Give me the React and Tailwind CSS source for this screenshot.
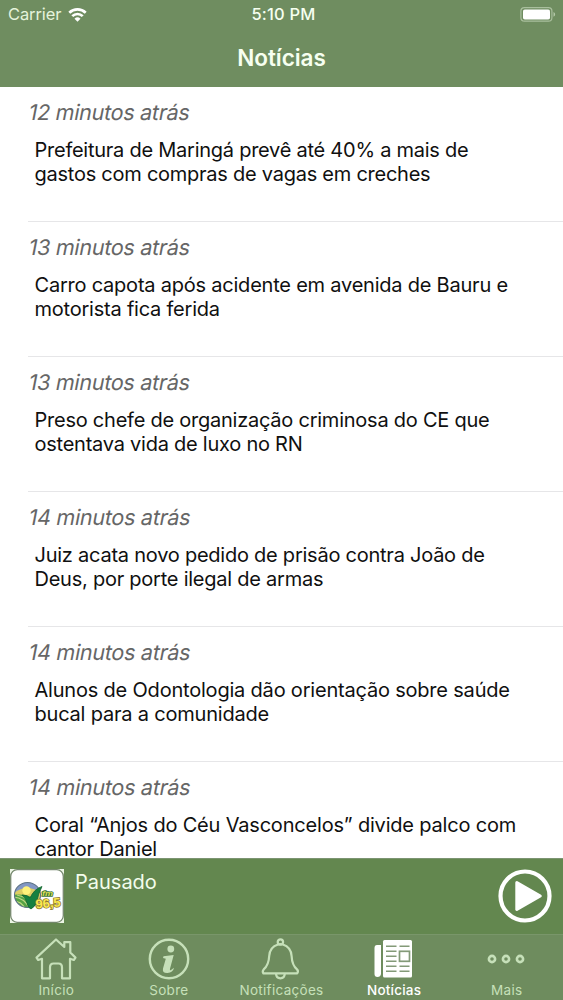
import React from "react";

const news = [
  { time: "12 minutos atrás", spacing: "tracking-[-0.25px]", lines: ["Prefeitura de Maringá prevê até 40% a mais de", "gastos com compras de vagas em creches"] },
  { time: "13 minutos atrás", spacing: "tracking-[-0.22px]", lines: ["Carro capota após acidente em avenida de Bauru e", "motorista fica ferida"] },
  { time: "13 minutos atrás", spacing: "tracking-[-0.24px]", lines: ["Preso chefe de organização criminosa do CE que", "ostentava vida de luxo no RN"] },
  { time: "14 minutos atrás", spacing: "tracking-[-0.24px]", lines: ["Juiz acata novo pedido de prisão contra João de", "Deus, por porte ilegal de armas"] },
  { time: "14 minutos atrás", spacing: "tracking-[-0.2px]", lines: ["Alunos de Odontologia dão orientação sobre saúde", "bucal para a comunidade"] },
  { time: "14 minutos atrás", spacing: "tracking-[-0.19px]", lines: ["Coral “Anjos do Céu Vasconcelos” divide palco com", "cantor Daniel"] },
];

function NewsRow({ time, lines, spacing }) {
  return (
    <article className="flex h-[135px] shrink-0 flex-col pl-7">
      <div className="flex h-full flex-col border-b border-[#e6e6e8] pt-[11px]">
        <time className="ml-[0.5px] -skew-x-[11deg] self-start text-[21.5px] leading-[28px] tracking-[-0.26px] text-[#666]">{time}</time>
        <h2 className={`mt-[12px] pl-[6.5px] text-[20px] leading-[24.4px] font-normal whitespace-nowrap text-[#101010] ${spacing}`}>
          {lines[0]}
          <br />
          {lines[1]}
        </h2>
      </div>
    </article>
  );
}

function WifiIcon() {
  return (
    <svg width="19" height="14" viewBox="0 0 20 15" fill="none" stroke="#fff" strokeWidth="2.9">
      <path d="M1.2 5.1a12.7 12.7 0 0 1 17.6 0" />
      <path d="M4.4 8.7a8 8 0 0 1 11.2 0" />
      <path d="M10 14.6 6.8 11.4a4.6 4.6 0 0 1 6.4 0Z" fill="#fff" stroke="none" />
    </svg>
  );
}

function BatteryIcon() {
  return (
    <svg width="36" height="16" viewBox="0 0 36 16" fill="none">
      <rect x="0.9" y="0.6" width="31" height="13.6" rx="3.5" stroke="#a9bf9d" strokeWidth="1.2" />
      <rect x="3" y="2.5" width="27" height="10" rx="1.8" fill="#fff" />
      <path d="M33.5 5.1v4.6c1.1-.5 1.6-1.3 1.6-2.3s-.5-1.8-1.6-2.3Z" fill="#b3c8a7" />
    </svg>
  );
}

function StationLogo() {
  return (
    <svg width="54" height="54" viewBox="0 0 54 54">
      <defs>
        <clipPath id="globe"><ellipse cx="17.5" cy="26" rx="13" ry="12.5" /></clipPath>
      </defs>
      <rect width="54" height="54" fill="#ecf5e5" />
      <rect x="0.7" y="0.7" width="52.6" height="52.6" rx="6.5" fill="#fff" stroke="#73866b" strokeWidth="1.3" />
      <g clipPath="url(#globe)">
        <rect x="3" y="13" width="30" height="28" fill="#8297c4" />
        <path d="M4 24Q17 14 31 24V31H4Z" fill="#dfce62" />
        <circle cx="16.5" cy="21.5" r="4.2" fill="#fff27a" />
        <path d="M3 26Q15 24 32 32V42H3Z" fill="#55a344" />
        <path d="M3 28Q14 28 20 40M3 32Q12 32 15 40M7 26Q20 29 27 39" fill="none" stroke="#bdd783" strokeWidth="1.2" />
      </g>
      <ellipse cx="17.5" cy="26" rx="13" ry="12.5" fill="none" stroke="#5d7285" strokeWidth="1.1" />
      <path d="M12 26Q18 26 20 29Q24 20 32 17.5Q28 25 27 32Q25 38 21 40Q18 39 17 34Q16 29 12 26Z" fill="#168040" stroke="#13642f" strokeWidth="0.8" />
      <text x="32" y="26.5" fontSize="8" textLength="11" lengthAdjust="spacingAndGlyphs" fontFamily="Liberation Sans, sans-serif" fontStyle="italic" fontWeight="700" fill="#d8dc52" stroke="#39733a" strokeWidth="1.6" paintOrder="stroke">fm</text>
      <text x="25.5" y="38.5" fontSize="12.5" textLength="25" lengthAdjust="spacingAndGlyphs" transform="rotate(-5 38 34)" fontFamily="Liberation Sans, sans-serif" fontWeight="700" fill="#fbe94f" stroke="#8f7b31" strokeWidth="1.6" paintOrder="stroke">96,5</text>
    </svg>
  );
}

function PlayIcon() {
  return (
    <svg width="54" height="54" viewBox="0 0 54 54" fill="none">
      <circle cx="27" cy="27" r="24.5" stroke="#fff" strokeWidth="4.2" />
      <path d="M18.8 13.5 42.3 27 18.8 40.5Z" fill="#fff" stroke="#fff" strokeWidth="3" strokeLinejoin="round" />
    </svg>
  );
}

function HomeIcon() {
  return (
    <svg width="42" height="42" viewBox="0 0 42 42" fill="none" stroke="currentColor" strokeWidth="2.2" strokeLinejoin="round">
      <path d="M21 1.5 1.5 19.6 3.2 22 7 20.8V40.3H15V29.5Q15 25.5 18.5 25.5H23.5Q27 25.5 27 29.5V40.3H35V20.8L38.8 22 40.5 19.6 35.3 14.5V4.2H29.3V9Z" />
    </svg>
  );
}

function InfoIcon() {
  return (
    <svg width="42" height="42" viewBox="0 0 42 42" fill="none">
      <circle cx="21" cy="21" r="19.2" stroke="currentColor" strokeWidth="2.4" />
      <circle cx="22.8" cy="11" r="3.4" fill="currentColor" />
      <path d="M15.5 18.2 25.7 17 22 30.8Q21.5 33 23 32L26 29.8Q25 34.8 19.5 35 14 35.2 15 30.5L17.8 20.7 15 20Z" fill="currentColor" />
    </svg>
  );
}

function BellIcon() {
  return (
    <svg width="42" height="42" viewBox="0 0 42 42" fill="none" stroke="currentColor" strokeWidth="2.2" strokeLinejoin="round">
      <path d="M18 6.5Q9.8 9 9.2 18C8.8 26 6 29.4 3.7 31.4Q2 33.2 3.4 35.4H37.2Q38.8 33.2 37 31.4C34.6 29.4 32 26 31.6 18Q31 9 22.8 6.5Q20.4 5.8 18 6.5Z" />
      <circle cx="20.4" cy="4" r="2.7" />
      <path d="M16 35.4Q16.2 40.3 20.4 40.3T24.8 35.4" />
    </svg>
  );
}

function NewsIcon() {
  return (
    <svg width="42" height="42" viewBox="0 0 42 42" fill="none">
      <path d="M8 7H4Q1.5 7 1.5 10V36Q1.5 39 4.5 39T8 36Z" fill="#fff" />
      <rect x="10" y="2" width="29" height="37.5" rx="1.5" fill="#fff" />
      <path d="M13 8.2H23.5M26.5 8.2H36.5M13 13.2H23.5M13 18.2H23.5M13 23.2H23.5M13 28.2H23.5M26.5 28.2H36.5M13 33.2H23.5M26.5 33.2H36.5" stroke="#839a78" strokeWidth="1.6" />
      <rect x="26.5" y="13.3" width="10" height="10" stroke="#839a78" strokeWidth="1.7" />
    </svg>
  );
}

function MoreIcon() {
  return (
    <svg width="42" height="42" viewBox="0 0 42 42" fill="none" stroke="currentColor" strokeWidth="2.6">
      <circle cx="6" cy="21" r="3.1" /><circle cx="20" cy="21" r="3.1" /><circle cx="34" cy="21" r="3.1" />
    </svg>
  );
}

const tabs = [
  { label: "Início", Icon: HomeIcon },
  { label: "Sobre", Icon: InfoIcon },
  { label: "Notificações", Icon: BellIcon },
  { label: "Notícias", Icon: NewsIcon, active: true },
  { label: "Mais", Icon: MoreIcon },
];

export default function App() {
  return (
    <div className="flex h-[1000px] w-[563px] flex-col overflow-hidden bg-white font-['Inter','Liberation_Sans',sans-serif]">
      <header className="flex h-[87px] shrink-0 flex-col bg-[#6f8d60] text-[#f6fff0]">
        <div className="grid h-[29px] grid-cols-[1fr_auto_1fr] items-center pr-[7px] pl-[8px]">
          <div className="flex items-center gap-[7px]">
            <span className="text-[16.5px] leading-[29px] tracking-[-0.1px] text-[#e5f3dc]">Carrier</span>
            <WifiIcon />
          </div>
          <span className="pl-[3px] text-[16.5px] leading-[29px] font-medium tracking-[0.2px]">5:10 PM</span>
          <span className="flex justify-end"><BatteryIcon /></span>
        </div>
        <h1 className="pt-[13px] text-center text-[22.5px] leading-[32px] font-semibold tracking-[-0.05px]">Notícias</h1>
      </header>
      <main className="flex min-h-0 flex-1 flex-col overflow-hidden">
        {news.map((item) => <NewsRow key={item.lines[0]} {...item} />)}
      </main>
      <section className="flex h-[76px] shrink-0 items-start border-t border-[#7c9472] bg-[#63874f] pt-[10px] pr-[11px] pl-[10px]">
        <StationLogo />
        <p className="ml-[11px] text-[20px] leading-[26px] text-[#f3fdec]">Pausado</p>
        <button className="ml-auto" aria-label="Reproduzir"><PlayIcon /></button>
      </section>
      <nav className="grid h-[66px] shrink-0 grid-cols-5 border-t border-[#79966a] bg-[#6e8c5e]">
        {tabs.map(({ label, Icon, active }) => (
          <a key={label} className={active ? "flex flex-col items-center pt-[3px] text-white" : "flex flex-col items-center pt-[3px] text-[#c6e0b9]"}>
            <Icon />
            <span className={active ? "mt-[2px] text-[13.5px] leading-[16px] font-medium tracking-[0.2px]" : "mt-[2px] text-[13.5px] leading-[16px] tracking-[0.3px]"}>{label}</span>
          </a>
        ))}
      </nav>
    </div>
  );
}
